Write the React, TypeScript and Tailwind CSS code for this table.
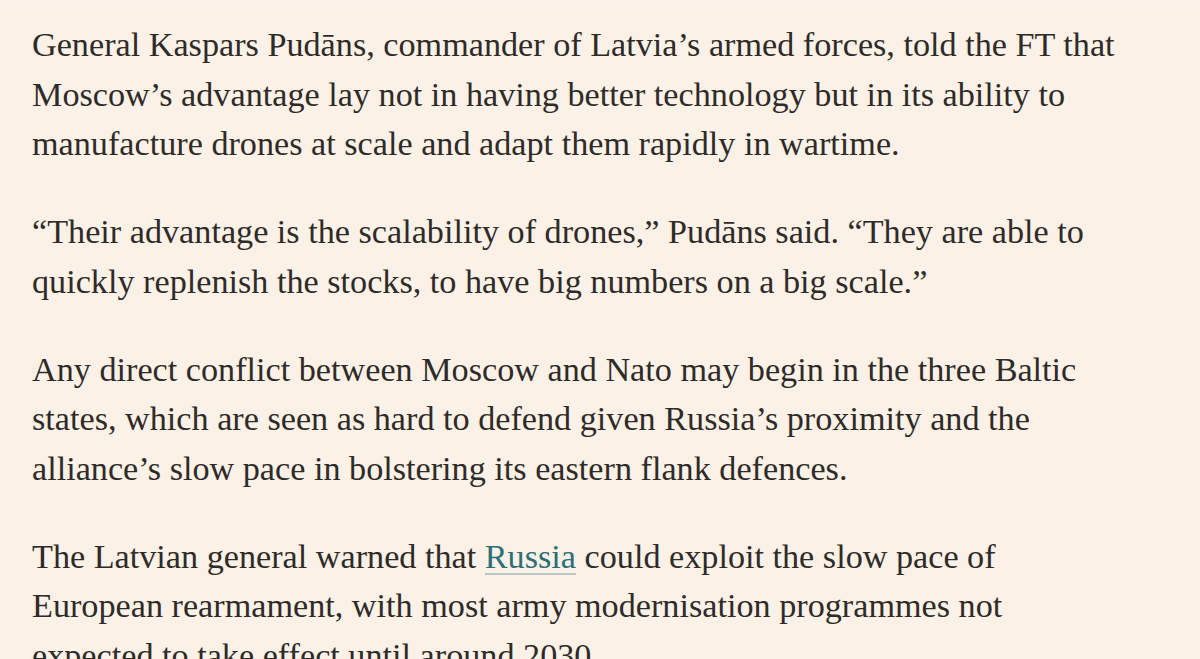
const paragraphs: React.ReactNode[][] = [
  [
    "General Kaspars Pudāns, commander of Latvia’s armed forces, told the FT that",
    "Moscow’s advantage lay not in having better technology but in its ability to",
    "manufacture drones at scale and adapt them rapidly in wartime.",
  ],
  [
    "“Their advantage is the scalability of drones,” Pudāns said. “They are able to",
    "quickly replenish the stocks, to have big numbers on a big scale.”",
  ],
  [
    "Any direct conflict between Moscow and Nato may begin in the three Baltic",
    "states, which are seen as hard to defend given Russia’s proximity and the",
    "alliance’s slow pace in bolstering its eastern flank defences.",
  ],
  [
    <>
      The Latvian general warned that{" "}
      <a
        href="#"
        className="text-[#2d6f79] underline decoration-[#b9c6c6] decoration-2 underline-offset-[5px]"
      >
        Russia
      </a>{" "}
      could exploit the slow pace of
    </>,
    "European rearmament, with most army modernisation programmes not",
    "expected to take effect until around 2030.",
  ],
];

export default function App() {
  return (
    <main className="h-[659px] overflow-hidden bg-[#fcf1e6] border-t-2 border-[#f9f3ee] pl-[32px] pr-4 pt-[18px] text-[#2e2b29] font-['Liberation_Serif',serif] text-[34.2px] leading-[49.5px]">
      {paragraphs.map((lines, i) => (
        <p key={i} className="mb-[38.5px] whitespace-nowrap">
          {lines.map((line, j) => (
            <span key={j} className="block">
              {line}
            </span>
          ))}
        </p>
      ))}
    </main>
  );
}
